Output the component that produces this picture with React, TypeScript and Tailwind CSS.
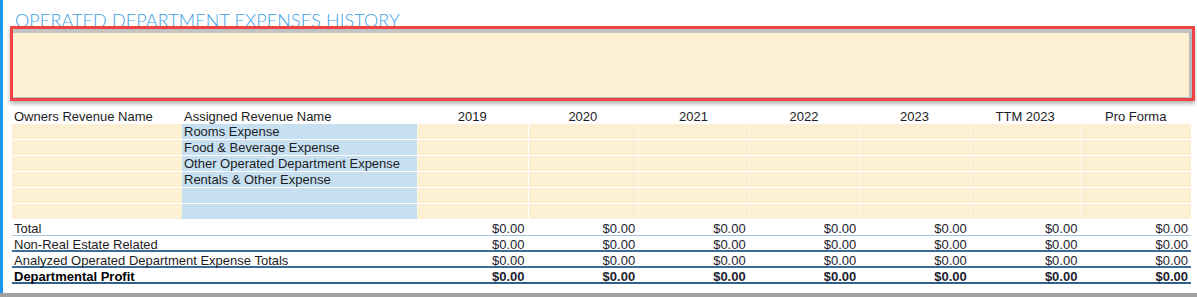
const years = ['2019', '2020', '2021', '2022', '2023', 'TTM 2023', 'Pro Forma'];

const assigned = [
  'Rooms Expense',
  'Food & Beverage Expense',
  'Other Operated Department Expense',
  'Rentals & Other Expense',
  '',
  '',
];

const footer = [
  { label: 'Total', bold: false, line: 'border-b border-b-[#a9c5de]' },
  { label: 'Non-Real Estate Related', bold: false, line: 'border-b-2 border-b-[#3d6c96]' },
  { label: 'Analyzed Operated Department Expense Totals', bold: false, line: 'border-b-2 border-b-[#3d6c96]' },
  { label: 'Departmental Profit', bold: true, line: 'border-b-2 border-b-[#2f5f8a]' },
];

const grid = 'grid grid-cols-[170px_235px_repeat(7,1fr)]';

export default function App() {
  return (
    <div className="w-[1197px] h-[297px] bg-white flex flex-col overflow-hidden font-['Liberation_Sans',Arial,sans-serif] text-[13px] text-[#1c1c24]">
      <div className="flex flex-1">
        <div className="w-[3px] bg-[#1e96f0]" />
        <div className="flex-1 pl-[7px] pr-[2px]">
          <h1 className="ml-[5px] mt-[10px] h-[16px] leading-[20px] text-[18px] font-light tracking-[0.1px] text-[#3ea0e6] font-['Lato',sans-serif] whitespace-nowrap">
            OPERATED DEPARTMENT EXPENSES HISTORY
          </h1>

          <div className="relative h-[75px] border-[3px] border-[#f04444] shadow-[0_3px_4px_rgba(0,0,0,0.28)]">
            <div className="h-full border-t-[4px] border-t-[#c3c3c3] border-r-[3px] border-r-[#b5bcc0] border-b border-b-[#a4c8c6] bg-[#fdefd2]" />
          </div>

          <div className="ml-[2px] mr-[4px] mt-[6px]">
            <div className={`${grid} h-[17px] leading-[19px]`}>
              <div className="pl-[2px] whitespace-nowrap">Owners Revenue Name</div>
              <div className="pl-[2px] whitespace-nowrap">Assigned Revenue Name</div>
              {years.map((y) => (
                <div key={y} className="text-center">
                  {y}
                </div>
              ))}
            </div>

            {assigned.map((name, i) => (
              <div key={i} className={`${grid} grid-rows-[15px] h-[16px] leading-[16px] border-b border-b-white`}>
                <div className="bg-[#fdefd2]" />
                <div className="bg-[#c7e0f1] pl-[2px] whitespace-nowrap">{name}</div>
                {years.map((y, j) => (
                  <div
                    key={y}
                    className={`bg-[#fdefd2] border-l ${j === 1 ? 'border-l-white' : 'border-l-[#fff7ea]'}`}
                  />
                ))}
              </div>
            ))}

            {footer.map((row) => (
              <div key={row.label} className={`${grid} h-[16px] leading-[17px] ${row.line} ${row.bold ? 'font-bold text-black' : ''}`}>
                <div className="col-span-2 pl-[2px] whitespace-nowrap">{row.label}</div>
                {years.map((y) => (
                  <div key={y} className="text-right pr-[3px] text-[#232330]">
                    $0.00
                  </div>
                ))}
              </div>
            ))}
          </div>
        </div>
      </div>
      <div className="h-[4px] bg-[#a0a0a0]" />
    </div>
  );
}
